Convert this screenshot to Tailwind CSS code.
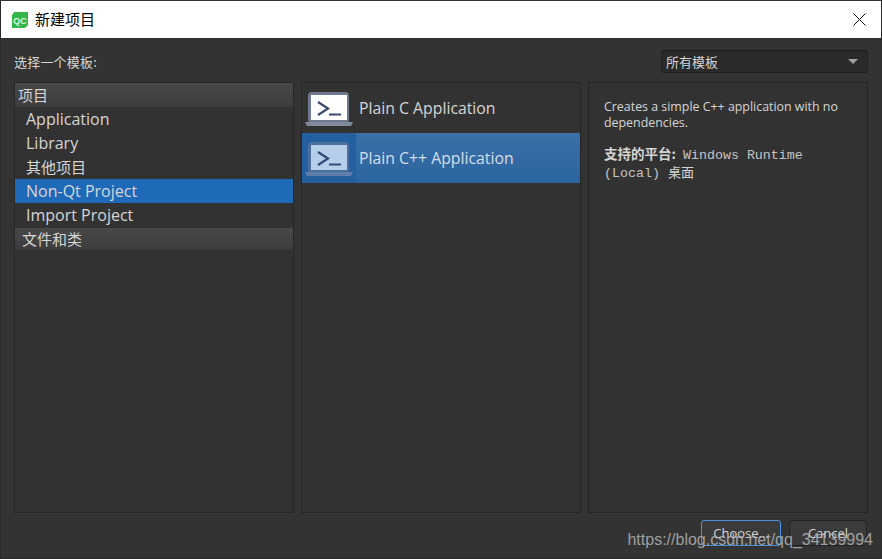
<!DOCTYPE html>
<html lang="en">

<head>
    <meta charset="UTF-8">
    <title>新建项目</title>
    <script src="https://cdn.jsdelivr.net/npm/@tailwindcss/browser@4"></script>
</head>

<body class="bg-[#2e2e2e]">
    <div class="relative w-[882px] h-[559px] overflow-hidden bg-[#333333] border border-t-[#333] border-x-[#2a2a2a] border-b-[#2a2a2a] flex flex-col text-[#d6d6d6] font-['Open_Sans','Noto_Sans_CJK_SC',sans-serif]">
        <!-- title bar -->
        <div class="h-[37px] bg-white flex items-center shrink-0 text-black">
            <svg class="ml-[11px] w-4 h-4" viewBox="0 0 16 16">
                <path d="M2 0H16V13L13 16H0V3Z" fill="#35b64a" />
                <text x="8" y="11.5" text-anchor="middle" font-size="9" font-family="Liberation Sans" font-weight="700" fill="#d8f5dc">QC</text>
            </svg>
            <span class="ml-[7px] text-[15px] font-['Noto_Sans_CJK_SC',sans-serif]">新建项目</span>
            <svg class="ml-auto mr-[15px] w-[13px] h-[13px]" viewBox="0 0 13 13" fill="none" stroke="#111" stroke-width="1">
                <path d="M0.5 0.5L12.5 12.5M12.5 0.5L0.5 12.5" />
            </svg>
        </div>

        <!-- filter row -->
        <div class="flex items-center justify-between h-[44px] pl-[13px] pr-[13px] shrink-0">
            <span class="text-[13px] mt-[4px] font-['Noto_Sans_CJK_SC',sans-serif] tracking-[0.2px]">选择一个模板:</span>
            <div class="w-[207px] h-[23px] mt-[3px] rounded-[3px] border border-[#202020] bg-[#2a2a2a] flex items-center justify-between pl-[4px] pr-[9px] text-[13px] font-['Noto_Sans_CJK_SC',sans-serif]">
                <span>所有模板</span>
                <span class="w-0 h-0 border-x-[5px] border-x-transparent border-t-[5px] border-t-[#a0a0a0]"></span>
            </div>
        </div>

        <!-- panels -->
        <div class="flex gap-[7px] pl-[13px] pr-[13px] h-[431px] shrink-0">
            <div class="w-[280px] border border-[#262626] bg-[#323232] text-[16px] leading-[24px]">
                <div class="h-[24px] pl-[3px] bg-gradient-to-b from-[#484848] to-[#3c3c3c] text-[15px] leading-[23px] font-['Noto_Sans_CJK_SC',sans-serif]">项目</div>
                <div class="h-[24px] pl-[11px]">Application</div>
                <div class="h-[24px] pl-[11px]">Library</div>
                <div class="h-[24px] pl-[11px] text-[15px] font-['Noto_Sans_CJK_SC',sans-serif]">其他项目</div>
                <div class="h-[24px] pl-[11px] bg-[#1f6ab8]">Non-Qt Project</div>
                <div class="h-[25px] pl-[11px]">Import Project</div>
                <div class="h-[22px] pl-[7px] bg-gradient-to-b from-[#484848] to-[#3c3c3c] text-[15px] leading-[22px] font-['Noto_Sans_CJK_SC',sans-serif]">文件和类</div>
            </div>

            <div class="w-[280px] border border-[#262626] bg-[#323232] text-[15.8px]">
                <div class="h-[50px] flex items-center">
                    <svg class="ml-[3px] w-[48px] h-[36px] self-start mt-[9px]" viewBox="0 0 48 36">
                        <rect x="3" y="0" width="41" height="31" rx="4" fill="#6f7a8e" />
                        <rect x="6" y="3" width="36" height="25" fill="#fff" />
                        <path d="M0 30H48L46 34H2Z" fill="#808a9c" />
                        <path d="M13 10L23 16.5L13 23" fill="none" stroke="#3a4a6b" stroke-width="2.2" />
                        <path d="M24 22.5H36" stroke="#3a4a6b" stroke-width="2" />
                    </svg>
                    <span class="ml-[6px] pt-[2px]">Plain C Application</span>
                </div>
                <div class="h-[50px] flex items-center bg-[#24609f]">
                    <svg class="ml-[3px] w-[48px] h-[36px] self-start mt-[9px]" viewBox="0 0 48 36">
                        <rect x="3" y="0" width="41" height="31" rx="4" fill="#4d6f9e" />
                        <rect x="6" y="3" width="36" height="25" fill="#b5cfea" />
                        <path d="M0 30H48L46 34H2Z" fill="#5f7ea8" />
                        <path d="M13 10L23 16.5L13 23" fill="none" stroke="#2f4a78" stroke-width="2.2" />
                        <path d="M24 22.5H36" stroke="#2f4a78" stroke-width="2" />
                    </svg>
                    <span class="ml-[3px] flex-1 h-full flex items-center pl-[3px] pt-[2px] bg-gradient-to-b from-[#3b70a8] to-[#2b649f] text-[#d5deea]">Plain C++ Application</span>
                </div>
            </div>

            <div class="w-[280px] border border-[#262626] bg-[#323232] pl-[15px] pt-[16px] text-[12.4px] leading-[16px]">
                <p>Creates a simple C++ application with no<br>dependencies.</p>
                <div class="mt-[13px] h-[19px] leading-[18px] flex items-baseline">
                    <b class="font-['Noto_Sans_CJK_SC',sans-serif] font-bold text-[13.5px]">支持的平台:</b>
                    <span class="ml-[7px] font-['Liberation_Mono',monospace] text-[13.33px] text-[#c4c4c4]">Windows Runtime</span>
                </div>
                <div class="h-[18px] leading-[18px] flex items-baseline">
                    <span class="font-['Liberation_Mono',monospace] text-[13.33px] text-[#c4c4c4]">(Local)</span>
                    <span class="ml-[8px] text-[13px] font-['Noto_Sans_CJK_SC',sans-serif]">桌面</span>
                </div>
            </div>
        </div>

        <!-- buttons -->
        <div class="flex justify-end gap-[8px] pr-[14px] pt-[7px] text-[13px] leading-[24px]">
            <div class="w-[80px] h-[26px] rounded-[3px] border border-[#4a90e0] bg-[#3a3a3a] text-center">Choose...</div>
            <div class="w-[78px] h-[26px] rounded-[3px] border border-[#232323] bg-[#3a3a3a] text-center">Cancel</div>
        </div>

        <!-- watermark over the dialog -->
        <div class="absolute right-[8px] top-[529px] font-['Liberation_Sans',sans-serif] text-[16px] leading-[20px] text-[#bdbdbd]/80">https://blog.csdn.net/qq_34139994</div>
    </div>
</body>

</html>
